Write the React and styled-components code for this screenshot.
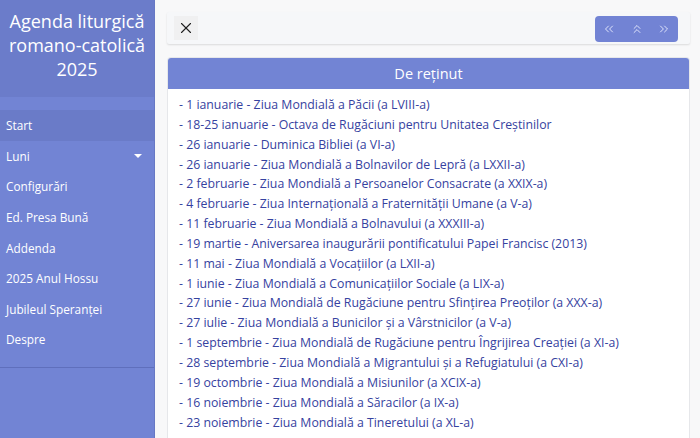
import React from "react";
import styled, { createGlobalStyle } from "styled-components";
import { ChevronsLeft, ChevronsUp, ChevronsRight, X } from "lucide-react";

const Global = createGlobalStyle`
  html, body { margin: 0; padding: 0; height: 100%; }
  body { font-family: "Open Sans", "Noto Sans", sans-serif; background: #f8f8f9; overflow: hidden; }
  #root { height: 100%; }
`;

const Layout = styled.div`
  display: flex;
  height: 438px;
  width: 700px;
`;

const Sidebar = styled.aside`
  width: 154px;
  flex: none;
  background: #7284d4;
  display: flex;
  flex-direction: column;
  color: #fff;
  border-right: 1px solid #6778c4;
`;

const Brand = styled.div`
  background: #6b7cca;
  height: 97px;
  box-sizing: border-box;
  padding-top: 9px;
  text-align: center;
  font-size: 18px;
  line-height: 24px;
  font-weight: 400;
`;

const Menu = styled.nav`
  margin-top: 13px;
  border-bottom: 1px solid #5f6fbc;
  padding-bottom: 12px;
  display: flex;
  flex-direction: column;
`;

const MenuItem = styled.div`
  height: 30.6px;
  display: flex;
  align-items: center;
  justify-content: space-between;
  padding: 0 12px 0 6px;
  font-size: 11.8px;
  background: ${(p) => (p.$active ? "#6a7bc8" : "transparent")};
`;

const Caret = styled.span`
  width: 0;
  height: 0;
  border-left: 4px solid transparent;
  border-right: 4px solid transparent;
  border-top: 4px solid #fff;
`;

const Main = styled.main`
  flex: 1;
  padding: 12px 10px 0 12px;
  display: flex;
  flex-direction: column;
  gap: 13px;
  min-width: 0;
`;

const Toolbar = styled.div`
  height: 32px;
  background: #f6f7f9;
  box-shadow: 0 1px 2px rgba(0, 0, 0, 0.12);
  border-radius: 2px;
  display: flex;
  align-items: center;
  justify-content: space-between;
  padding: 0 12px 0 7px;
`;

const CloseBtn = styled.button`
  width: 24px;
  height: 24px;
  border: none;
  background: #f0f0f1;
  display: flex;
  align-items: center;
  justify-content: center;
  padding: 0;
  color: #1f1f1f;
`;

const NavGroup = styled.div`
  display: flex;
  background: #7283d4;
  border-radius: 4px;
  height: 26px;
  width: 83px;
  margin-top: 2px;
`;

const NavBtn = styled.button`
  flex: 1;
  border: none;
  background: transparent;
  color: #eef0ff;
  display: flex;
  align-items: center;
  justify-content: center;
  padding: 0;
`;

const Card = styled.section`
  flex: 1;
  background: #fff;
  border: 1px solid #e6e7ea;
  border-bottom: none;
  border-radius: 4px 4px 0 0;
  display: flex;
  flex-direction: column;
  overflow: hidden;
`;

const CardHeader = styled.div`
  height: 31px;
  background: #7284d4;
  color: #fff;
  display: flex;
  align-items: center;
  justify-content: center;
  font-size: 14.5px;
`;

const List = styled.ul`
  list-style: none;
  margin: 0;
  padding: 6px 12px 0 11px;
`;

const Item = styled.li`
  font-size: 12.3px;
  line-height: 19.85px;
  color: #3642a0;
  white-space: nowrap;
`;

const menu = [
  "Start",
  "Luni",
  "Configurări",
  "Ed. Presa Bună",
  "Addenda",
  "2025 Anul Hossu",
  "Jubileul Speranței",
  "Despre",
];

const items = [
  "- 1 ianuarie - Ziua Mondială a Păcii (a LVIII-a)",
  "- 18-25 ianuarie - Octava de Rugăciuni pentru Unitatea Creștinilor",
  "- 26 ianuarie - Duminica Bibliei (a VI-a)",
  "- 26 ianuarie - Ziua Mondială a Bolnavilor de Lepră (a LXXII-a)",
  "- 2 februarie - Ziua Mondială a Persoanelor Consacrate (a XXIX-a)",
  "- 4 februarie - Ziua Internațională a Fraternității Umane (a V-a)",
  "- 11 februarie - Ziua Mondială a Bolnavului (a XXXIII-a)",
  "- 19 martie - Aniversarea inaugurării pontificatului Papei Francisc (2013)",
  "- 11 mai - Ziua Mondială a Vocațiilor (a LXII-a)",
  "- 1 iunie - Ziua Mondială a Comunicațiilor Sociale (a LIX-a)",
  "- 27 iunie - Ziua Mondială de Rugăciune pentru Sfințirea Preoților (a XXX-a)",
  "- 27 iulie - Ziua Mondială a Bunicilor și a Vârstnicilor (a V-a)",
  "- 1 septembrie - Ziua Mondială de Rugăciune pentru Îngrijirea Creației (a XI-a)",
  "- 28 septembrie - Ziua Mondială a Migrantului și a Refugiatului (a CXI-a)",
  "- 19 octombrie - Ziua Mondială a Misiunilor (a XCIX-a)",
  "- 16 noiembrie - Ziua Mondială a Săracilor (a IX-a)",
  "- 23 noiembrie - Ziua Mondială a Tineretului (a XL-a)",
];

export default function App() {
  return (
    <>
      <Global />
      <Layout>
        <Sidebar>
          <Brand>
            Agenda liturgică
            <br />
            romano-catolică
            <br />
            2025
          </Brand>
          <Menu>
            {menu.map((m, i) => (
              <MenuItem key={m} $active={i === 0}>
                {m}
                {m === "Luni" && <Caret />}
              </MenuItem>
            ))}
          </Menu>
        </Sidebar>
        <Main>
          <Toolbar>
            <CloseBtn aria-label="close">
              <X size={18} strokeWidth={1.5} />
            </CloseBtn>
            <NavGroup>
              <NavBtn><ChevronsLeft size={14} strokeWidth={1.5} /></NavBtn>
              <NavBtn><ChevronsUp size={14} strokeWidth={1.5} /></NavBtn>
              <NavBtn><ChevronsRight size={14} strokeWidth={1.5} /></NavBtn>
            </NavGroup>
          </Toolbar>
          <Card>
            <CardHeader>De reținut</CardHeader>
            <List>
              {items.map((t) => (
                <Item key={t}>{t}</Item>
              ))}
            </List>
          </Card>
        </Main>
      </Layout>
    </>
  );
}
